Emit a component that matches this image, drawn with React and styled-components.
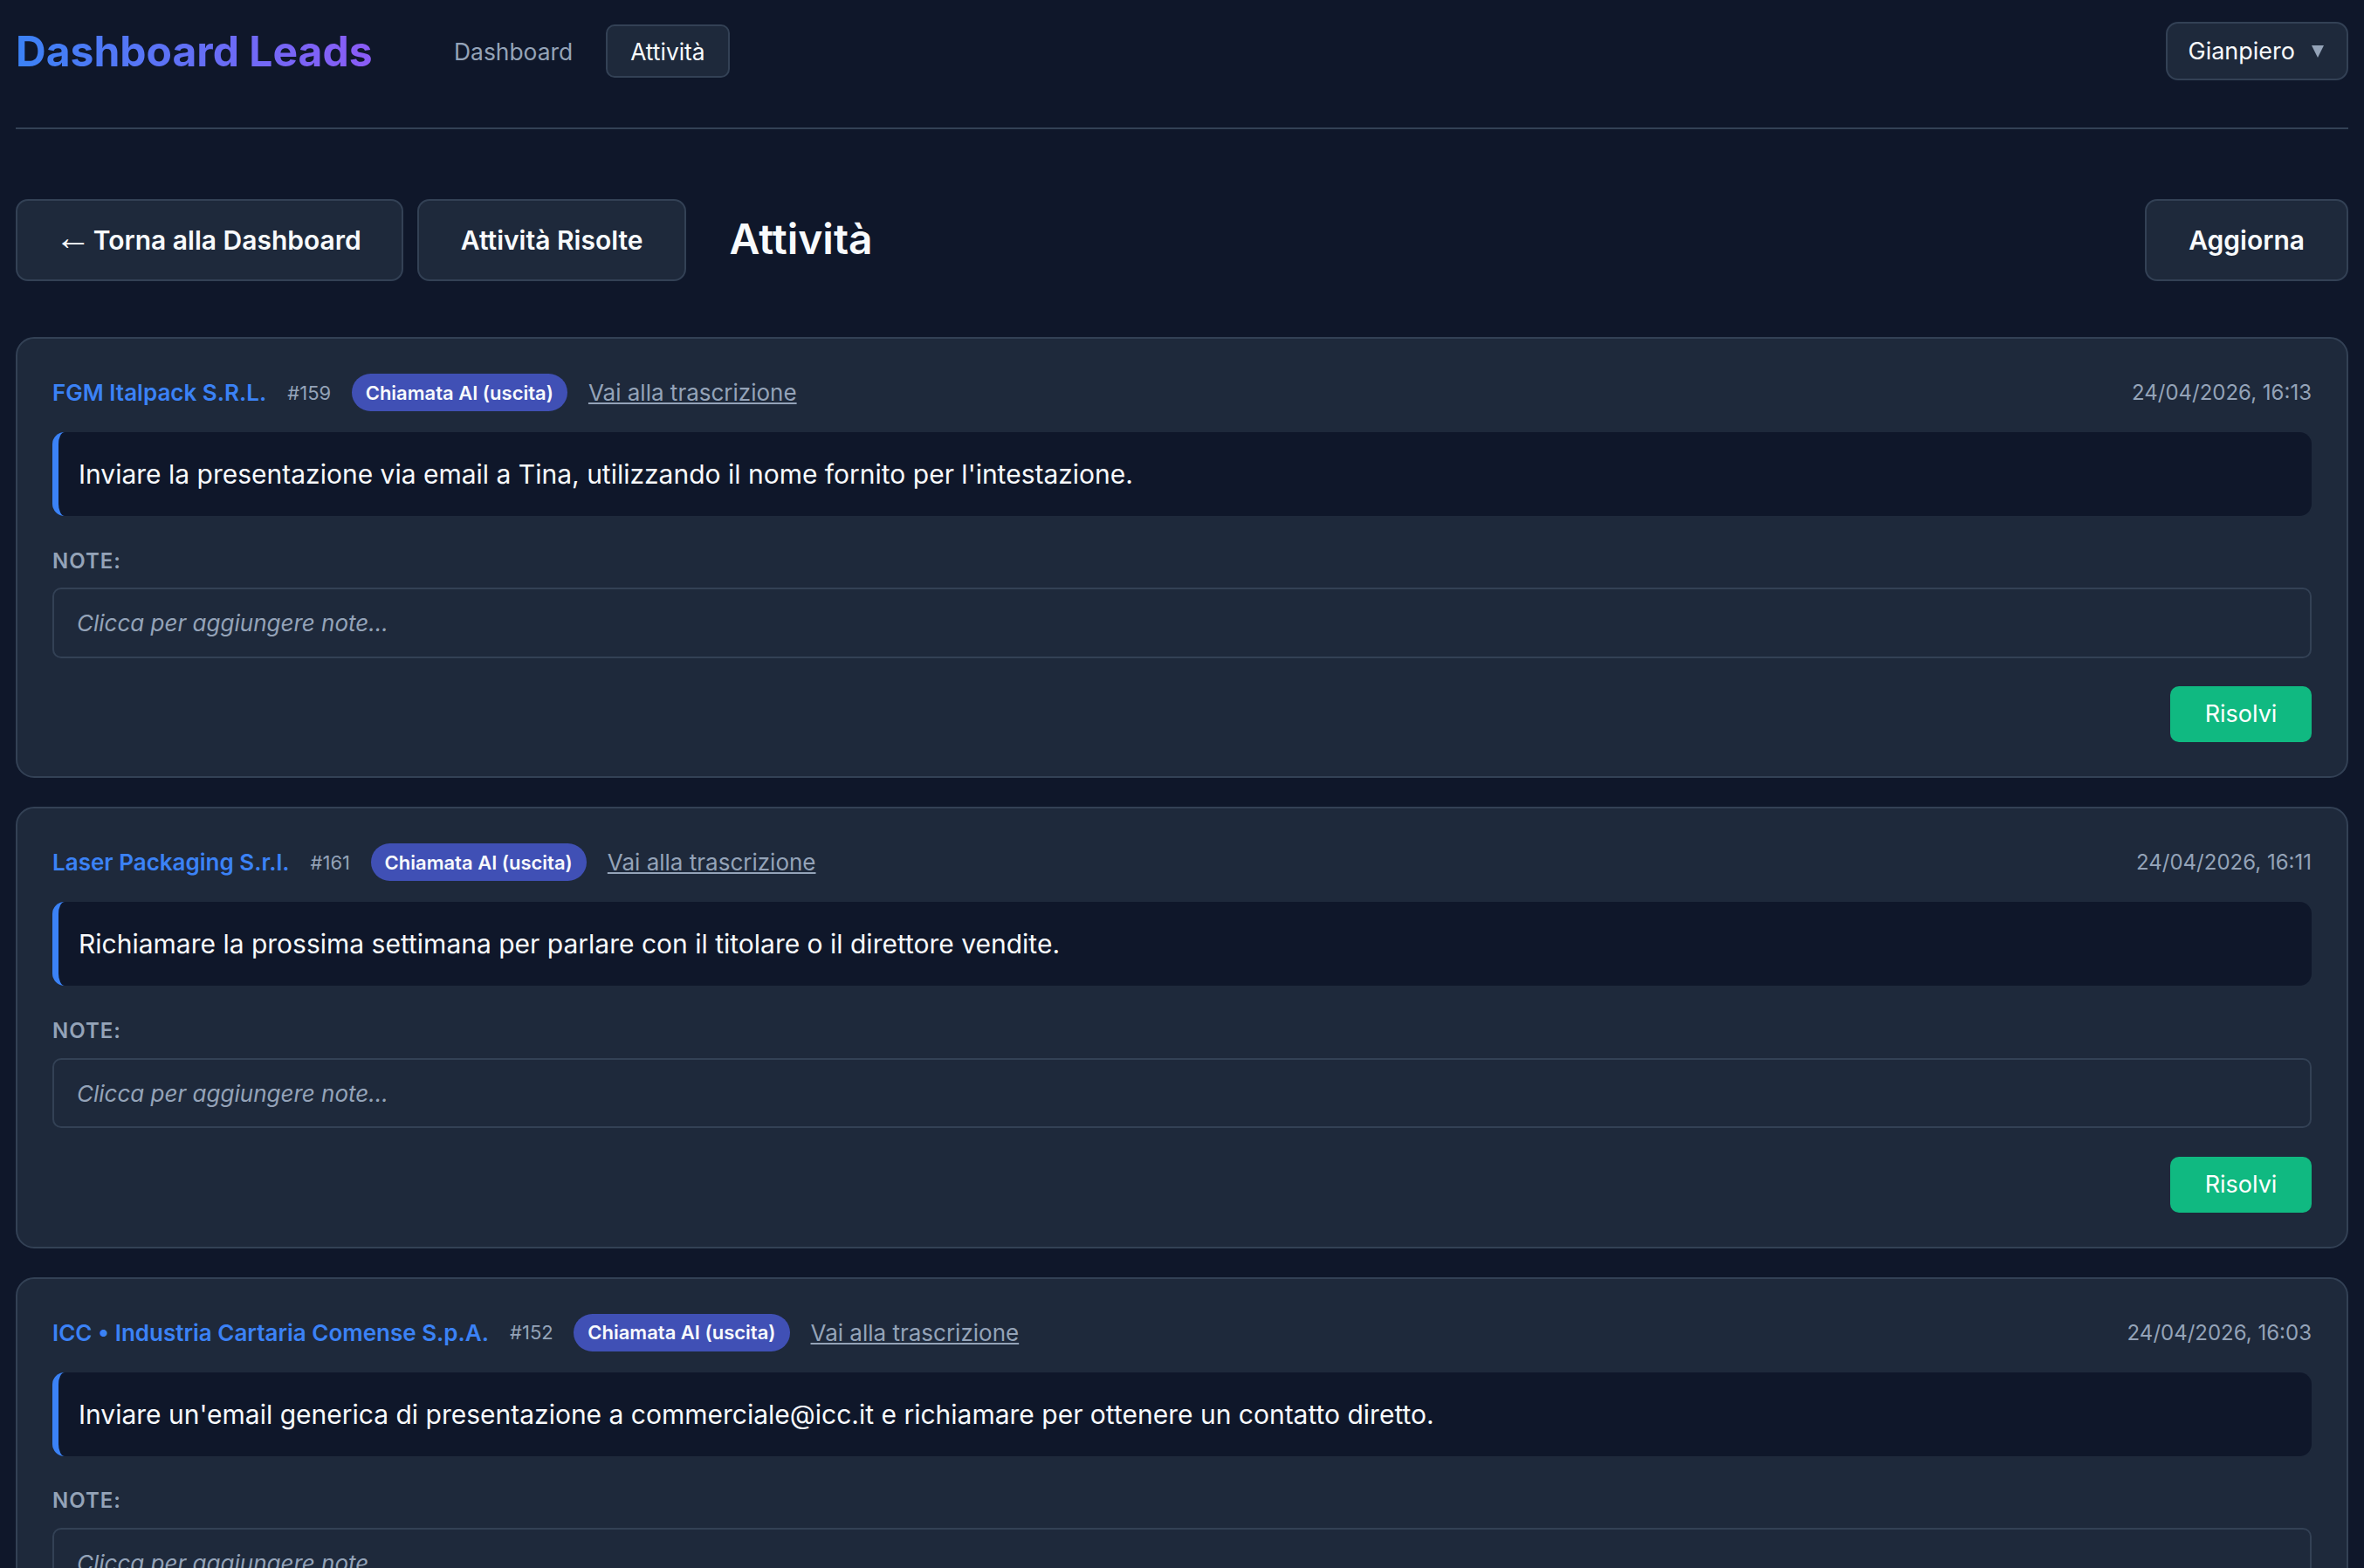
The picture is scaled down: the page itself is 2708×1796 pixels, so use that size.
import styled, { createGlobalStyle } from "styled-components";

const GlobalStyle = createGlobalStyle`
  * {
    box-sizing: border-box;
  }
  html,
  body {
    margin: 0;
    height: 100%;
    overflow: hidden;
    background: #0f172a;
  }
  body {
    font-family: Inter, "Liberation Sans", sans-serif;
    color: #f8fafc;
  }
`;

const Page = styled.div`
  padding: 25px 18px 0;
`;

const TopBar = styled.header`
  display: flex;
  align-items: center;
  justify-content: space-between;
  padding-bottom: 54px;
  border-bottom: 2px solid #334155;
  margin-bottom: 80px;
`;

const TopLeft = styled.div`
  display: flex;
  align-items: center;
`;

const Brand = styled.h1`
  margin: 0 65px 0 0;
  font-size: 48px;
  font-weight: 700;
  line-height: 1.2;
  background: linear-gradient(90deg, #3b82f6, #8b5cf6);
  -webkit-background-clip: text;
  background-clip: text;
  color: transparent;
`;

const Nav = styled.nav`
  display: flex;
  align-items: center;
  gap: 9px;
`;

const NavItem = styled.a`
  padding: 0 26.5px;
  height: 61px;
  display: flex;
  align-items: center;
  font-size: 26.4px;
  border-radius: 10px;
  border: 2px solid ${(props) => (props.$active ? "#334155" : "transparent")};
  background: ${(props) => (props.$active ? "#1e293b" : "transparent")};
  color: ${(props) => (props.$active ? "#f8fafc" : "#94a3b8")};
`;

const UserSelect = styled.div`
  display: flex;
  align-items: center;
  gap: 19px;
  height: 67px;
  padding: 0 26px 0 23px;
  background: #1e293b;
  border: 2px solid #334155;
  border-radius: 14px;
  font-size: 27px;
`;

const Caret = styled.svg`
  width: 14px;
  height: 14px;
  fill: #94a3b8;
`;

const Toolbar = styled.div`
  display: flex;
  align-items: center;
  gap: 16px;
  margin-bottom: 64px;
`;

const ToolButton = styled.button`
  height: 94px;
  padding: 0 48px;
  background: #1e293b;
  border: 2px solid #334155;
  border-radius: 14px;
  color: #f8fafc;
  font-family: inherit;
  font-size: 30px;
  font-weight: 600;
  &:last-child {
    margin-left: auto;
  }
`;

const BackButton = styled(ToolButton)`
  padding-right: 46px;
`;

const BackArrow = styled.span`
  font-family: "Liberation Sans", sans-serif;
  font-size: 42px;
  font-weight: 400;
  line-height: 0;
  vertical-align: 0;
  margin: 0 2.4px 0 -5.6px;
`;

const PageTitle = styled.h2`
  margin: -4px 0 0 33px;
  font-size: 48px;
  font-weight: 600;
`;

const TaskList = styled.div`
  display: flex;
  flex-direction: column;
  gap: 33px;
`;

const Card = styled.article`
  background: #1e293b;
  border: 2px solid #334155;
  border-radius: 21px;
  padding: 40px 40px 39px;
`;

const CardHead = styled.div`
  display: flex;
  align-items: center;
  height: 43px;
  margin-bottom: 24px;
`;

const Company = styled.a`
  font-size: 26px;
  font-weight: 600;
  color: #3b82f6;
  margin-right: 24px;
`;

const TaskId = styled.span`
  font-size: 22px;
  color: #94a3b8;
  margin-right: 23.5px;
`;

const Badge = styled.span`
  height: 43px;
  display: flex;
  align-items: center;
  padding: 0 16px;
  border-radius: 22px;
  background: #4050b5;
  font-size: 22px;
  font-weight: 600;
  margin-right: 24px;
`;

const TranscriptLink = styled.a`
  font-size: 26px;
  color: #94a3b8;
  text-decoration: underline;
`;

const DateLabel = styled.span`
  margin-left: auto;
  font-size: 24px;
  color: #94a3b8;
`;

const TaskText = styled.div`
  height: 96px;
  display: flex;
  align-items: center;
  padding: 0 23px;
  background: #0f172a;
  border-left: 7px solid #3b82f6;
  border-radius: 14px;
  font-size: 30px;
`;

const NoteLabel = styled.div`
  margin: 35.6px 0 14.8px;
  height: 32px;
  line-height: 32px;
  font-size: 24px;
  font-weight: 600;
  letter-spacing: 1px;
  color: #94a3b8;
`;

const NoteField = styled.div`
  height: 80.6px;
  display: flex;
  align-items: center;
  padding: 0 26px;
  border: 2px solid #334155;
  border-radius: 10px;
  font-size: 26px;
  font-style: italic;
  color: #94a3b8;
`;

const CardActions = styled.div`
  display: flex;
  justify-content: flex-end;
  margin-top: 32.4px;
`;

const ResolveButton = styled.button`
  width: 162px;
  height: 64px;
  padding-bottom: 2px;
  background: #10b981;
  border: 0;
  border-radius: 10px;
  color: #fff;
  font-family: inherit;
  font-size: 27px;
`;

const tasks = [
  {
    id: 159,
    company: "FGM Italpack S.R.L.",
    text: "Inviare la presentazione via email a Tina, utilizzando il nome fornito per l'intestazione.",
    date: "24/04/2026, 16:13",
  },
  {
    id: 161,
    company: "Laser Packaging S.r.l.",
    text: "Richiamare la prossima settimana per parlare con il titolare o il direttore vendite.",
    date: "24/04/2026, 16:11",
  },
  {
    id: 152,
    company: "ICC • Industria Cartaria Comense S.p.A.",
    text: "Inviare un'email generica di presentazione a commerciale@icc.it e richiamare per ottenere un contatto diretto.",
    date: "24/04/2026, 16:03",
  },
];

function TaskCard({ task }) {
  return (
    <Card>
      <CardHead>
        <Company>{task.company}</Company>
        <TaskId>#{task.id}</TaskId>
        <Badge>Chiamata AI (uscita)</Badge>
        <TranscriptLink>Vai alla trascrizione</TranscriptLink>
        <DateLabel>{task.date}</DateLabel>
      </CardHead>
      <TaskText>{task.text}</TaskText>
      <NoteLabel>NOTE:</NoteLabel>
      <NoteField>Clicca per aggiungere note...</NoteField>
      <CardActions>
        <ResolveButton>Risolvi</ResolveButton>
      </CardActions>
    </Card>
  );
}

export default function App() {
  return (
    <>
      <GlobalStyle />
      <Page>
        <TopBar>
          <TopLeft>
            <Brand>Dashboard Leads</Brand>
            <Nav>
              <NavItem>Dashboard</NavItem>
              <NavItem $active>Attività</NavItem>
            </Nav>
          </TopLeft>
          <UserSelect>
            Gianpiero
            <Caret viewBox="0 0 14 14">
              <polygon points="0,0 14,0 7,14" />
            </Caret>
          </UserSelect>
        </TopBar>
        <Toolbar>
          <BackButton>
            <BackArrow>←</BackArrow>Torna alla Dashboard
          </BackButton>
          <ToolButton>Attività Risolte</ToolButton>
          <PageTitle>Attività</PageTitle>
          <ToolButton>Aggiorna</ToolButton>
        </Toolbar>
        <TaskList>
          {tasks.map((task) => (
            <TaskCard key={task.id} task={task} />
          ))}
        </TaskList>
      </Page>
    </>
  );
}
